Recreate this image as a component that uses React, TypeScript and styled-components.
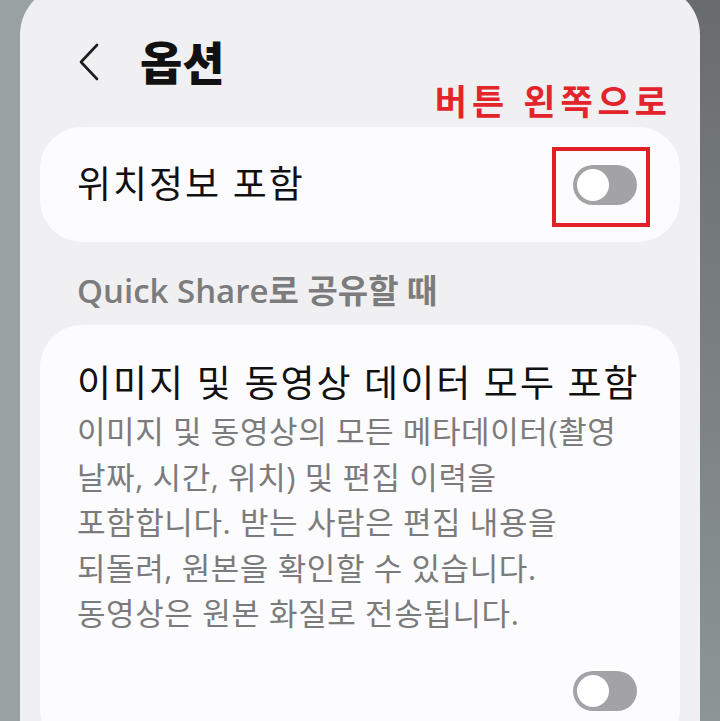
import styled, { createGlobalStyle } from 'styled-components'

const GlobalStyle = createGlobalStyle`
  html, body {
    margin: 0;
    padding: 0;
  }
  body {
    font-family: 'Open Sans', 'Noto Sans CJK KR', sans-serif;
    -webkit-font-smoothing: antialiased;
  }
`

function Toggle() {
  return (
    <StyledToggle>
      <span className='knob'></span>
    </StyledToggle>
  )
}

function App() {
  return (
    <Page>
      <GlobalStyle />
      <Screen>
        <Header>
          <BackButton aria-label='뒤로'>
            <svg width='22' height='38' viewBox='0 0 22 38'>
              <polyline
                points='19,2 3,19 19,36'
                fill='none'
                stroke='#1c1c1c'
                strokeWidth='2.6'
                strokeLinecap='round'
                strokeLinejoin='round'
              />
            </svg>
          </BackButton>
          <Title>옵션</Title>
          <Annotation>버튼 왼쪽으로</Annotation>
        </Header>

        <Card className='row'>
          <ItemTitle>위치정보 포함</ItemTitle>
          <Highlight>
            <Toggle />
          </Highlight>
        </Card>

        <SectionLabel>Quick Share로 공유할 때</SectionLabel>

        <Card className='stack'>
          <ItemTitle>이미지 및 동영상 데이터 모두 포함</ItemTitle>
          <Description>
            이미지 및 동영상의 모든 메타데이터(촬영 날짜, 시간, 위치) 및 편집
            이력을 포함합니다. 받는 사람은 편집 내용을 되돌려, 원본을 확인할 수
            있습니다. 동영상은 원본 화질로 전송됩니다.
          </Description>
          <ToggleRow>
            <Toggle />
          </ToggleRow>
        </Card>
      </Screen>
    </Page>
  )
}

export default App

const Page = styled.div`
  width: 720px;
  height: 721px;
  overflow: hidden;
  display: flex;
  justify-content: center;
  background: linear-gradient(to right, #99a1a3 0 50%, transparent 50%),
    linear-gradient(to bottom, #686c6c, #8d9595);
`

const Screen = styled.div`
  width: 680px;
  margin-top: -15px;
  height: 760px;
  box-sizing: border-box;
  padding: 0 20px;
  border-radius: 50px 50px 0 0;
  background-color: #f0f0f2;
`

const Header = styled.div`
  position: relative;
  height: 142px;
  box-sizing: border-box;
  display: flex;
  align-items: flex-start;
  gap: 40px;
  padding: 54px 0 0 38px;
`

const BackButton = styled.button`
  border: none;
  background: none;
  padding: 0;
  display: flex;
  margin-top: 4px;
`

const Title = styled.h1`
  margin: 0;
  font-size: 46px;
  line-height: 1;
  font-weight: 900;
  color: #111;
`

const Annotation = styled.span`
  position: absolute;
  right: 8px;
  top: 99px;
  font-size: 35px;
  font-weight: 700;
  color: #e3242b;
  letter-spacing: 5px;
  line-height: 1;
`

const Card = styled.div`
  background-color: #fcfcfe;
  border-radius: 42px;

  &.row {
    height: 115px;
    display: flex;
    align-items: center;
    justify-content: space-between;
    padding: 0 43px 0 37px;
  }

  &.stack {
    display: flex;
    flex-direction: column;
    padding: 34px 37px 40px 37px;
  }
`

const ItemTitle = styled.div`
  font-size: 37px;
  line-height: 1.3;
  letter-spacing: 2px;
  color: #111;
  white-space: nowrap;
`

const Highlight = styled.div`
  position: relative;
  display: flex;

  &::after {
    content: '';
    position: absolute;
    left: -21px;
    top: -18px;
    width: 98px;
    height: 80px;
    box-sizing: border-box;
    border: 4px solid #e21e26;
  }
`

const StyledToggle = styled.span`
  display: flex;
  align-items: center;
  width: 64px;
  height: 40px;
  border-radius: 20px;
  background-color: #a3a3a7;
  box-sizing: border-box;
  padding: 4px;

  & .knob {
    width: 32px;
    height: 32px;
    border-radius: 50%;
    background-color: #fff;
  }
`

const SectionLabel = styled.div`
  height: 83px;
  box-sizing: border-box;
  padding: 10px 0 0 37px;
  display: flex;
  align-items: center;
  font-size: 33px;
  font-weight: 600;
  color: #7c7c7d;
`

const Description = styled.p`
  margin: 2px 0 0;
  font-size: 31px;
  line-height: 45.5px;
  letter-spacing: 0.6px;
  color: #7b7b7c;
  word-break: keep-all;
`

const ToggleRow = styled.div`
  display: flex;
  justify-content: flex-end;
  padding-right: 6px;
  margin-top: 34px;
`
